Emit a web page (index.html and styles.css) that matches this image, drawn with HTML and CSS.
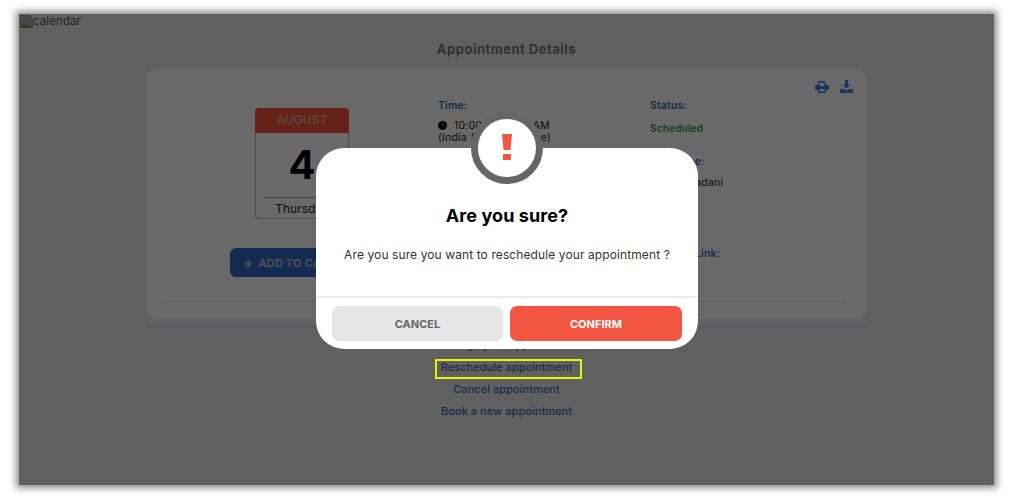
FILE: index.html
```html
<!DOCTYPE html>
<html lang="en">
<head>
    <meta charset="UTF-8">
    <title>Appointment Details</title>
    <link rel="stylesheet" href="styles.css">
</head>
<body>
    <div class="screen">
        <div class="broken-img">
            <svg width="16" height="16" viewBox="0 0 16 16"><path d="M1.500 1.500h9l3 3v9h-12z" fill="#b0b0b0" stroke="#999"/><path d="M2 14l4-5 3 3 2-1 2 3z" fill="#5c9a3c"/></svg>
            <span>calendar</span>
        </div>
        <h1>Appointment Details</h1>

        <div class="card">
            <div class="actions">
                <svg width="14" height="13" viewBox="0 0 14 13"><path d="M3 5V1h6.500L11 2.500V5h1.500Q14 5 14 6.500V10h-3v3H3v-3H0V6.500Q0 5 1.500 5zM4.500 2.500V6h5V3zM4.500 9v2.500h5V9z" fill="#3f7fe0" fill-rule="evenodd"/></svg>
                <svg width="13" height="13" viewBox="0 0 13 13"><path d="M5 0h3v4.500h2.500L6.500 8.500l-4-4H5zM0 9h4l2.500 1.500L9 9h4v4H0z" fill="#3f7fe0"/></svg>
            </div>
            <div class="details">
                <div class="date-col">
                    <div class="calendar">
                        <div class="month">AUGUST</div>
                        <div class="day">4</div>
                        <div class="weekday">Thursday</div>
                    </div>
                    <button class="add-btn"><span class="plus">+</span>ADD TO CALENDAR</button>
                </div>
                <div class="info-col">
                    <div class="label">Time:</div>
                    <div class="value time-value">
                        <svg width="9" height="9" viewBox="0 0 10 10"><circle cx="5" cy="5" r="5" fill="#111"/><path d="M5 2v3.300l2 1" stroke="#777" fill="none"/></svg>
                        <span>10:00 to 10:30 AM<br>(India Standard Time)</span>
                    </div>
                </div>
                <div class="info-col">
                    <div class="label">Status:</div>
                    <div class="value scheduled">Scheduled</div>
                    <div class="label name-label">Full Name:</div>
                    <div class="value">Mohan Vadani</div>
                    <div class="label link-label">Meeting Link:</div>
                </div>
            </div>
            <div class="card-rule"></div>
        </div>
        <div class="page-rule"></div>

        <div class="links">
            <a>Manage your appointment</a>
            <a class="marked">Reschedule appointment</a>
            <a>Cancel appointment</a>
            <a>Book a new appointment</a>
        </div>

        <div class="overlay"></div>
        <div class="modal">
            <div class="alert-icon"><span></span><span></span></div>
            <h2>Are you sure?</h2>
            <p>Are you sure you want to reschedule your appointment ?</p>
            <div class="modal-btns">
                <button class="cancel">CANCEL</button>
                <button class="confirm">CONFIRM</button>
            </div>
        </div>
    </div>
</body>
</html>
```

FILE: styles.css
```css
* {
    margin: 0;
    padding: 0;
    box-sizing: border-box;
}

body {
    font-family: 'Inter', 'Liberation Sans', sans-serif;
    background-color: #fff;
    height: 497px;
    overflow: hidden;
    padding: 14px 20px 0 19px;
}

.screen {
    position: relative;
    height: 471px;
    background-color: #eaeaea;
    box-shadow: 0 0 7px 3px rgba(0, 0, 0, 0.45);
}

.broken-img {
    display: flex;
    align-items: flex-start;
    height: 16px;
    font-size: 11.500px;
    line-height: 14px;
    color: #555;
}

.broken-img span {
    margin-left: -2px;
    letter-spacing: 0.1px;
}

h1 {
    font-size: 13px;
    font-weight: 700;
    color: #777;
    text-align: center;
    margin-top: 11px;
    height: 28px;
    line-height: 16px;
    letter-spacing: 0.5px;
}

.card {
    margin: 0 127px;
    height: 250px;
    background-color: #fff;
    border-radius: 10px;
    box-shadow: 0 -1px 1px #d5e0f2;
    padding: 11px 20px 0 20px;
}

.actions {
    display: flex;
    justify-content: flex-end;
    gap: 11px;
    height: 19px;
    margin-right: -6px;
}

.details {
    display: grid;
    grid-template-columns: 272px 212px 1fr;
    height: 202px;
}

.date-col {
    padding-left: 64px;
    padding-top: 9px;
}

.calendar {
    width: 94px;
    height: 111px;
    margin-left: 25px;
    background-color: #fff;
    border: 1px solid #bbb;
    border-radius: 4px;
    text-align: center;
}

.month {
    margin: -1px -1px 0;
    height: 25px;
    line-height: 24px;
    background-color: #f4503a;
    border-radius: 4px 4px 0 0;
    color: #e0b0a8;
    font-size: 12px;
    font-weight: 500;
}

.day {
    height: 65px;
    line-height: 63px;
    font-size: 40px;
    font-weight: 700;
    color: #000;
    margin: 0 8px;
    border-bottom: 1px solid #aaa;
}

.weekday {
    font-size: 12px;
    line-height: 21px;
    color: #222;
}

.add-btn {
    display: flex;
    align-items: center;
    width: 146px;
    height: 29px;
    margin-top: 29px;
    padding-left: 13px;
    border: none;
    border-radius: 6px;
    background-color: #2f69c4;
    color: #c8c8c8;
    font-family: inherit;
    font-size: 11px;
    font-weight: 600;
    white-space: nowrap;
    letter-spacing: 0.2px;
}

.plus {
    font-size: 15px;
    font-weight: 700;
    margin-right: 5px;
}

.label {
    font-size: 10.500px;
    font-weight: 600;
    color: #3a69b8;
    line-height: 14px;
    letter-spacing: 0.1px;
}

.value {
    font-size: 10.500px;
    line-height: 12px;
    color: #222;
    letter-spacing: 0.2px;
}

.time-value {
    display: flex;
    align-items: flex-start;
    gap: 7px;
    margin-top: 7px;
}

.time-value svg {
    margin-top: 1px;
    flex-shrink: 0;
}

.time-value span {
    margin-left: -16px;
    text-indent: 16px;
    word-spacing: 1px;
}

.scheduled {
    margin-top: 9px;
    font-size: 10px;
    font-weight: 600;
    color: #2f9a2f;
}

.name-label {
    margin-top: 21px;
}

.value + .name-label + .value {
    margin-top: 8px;
}

.link-label {
    margin-top: 58px;
}

.card-rule {
    height: 1px;
    background-color: #ddd;
}

.page-rule {
    height: 1px;
    margin: 7px 127px 0;
    background-color: #c6d6ee;
}

.links {
    display: flex;
    flex-direction: column;
    align-items: center;
    margin-top: 10px;
    font-size: 11px;
    font-weight: 500;
    color: #3a69b8;
    letter-spacing: 0.05px;
}

.links a {
    display: block;
    height: 22px;
    line-height: 17px;
}

.links .marked {
    position: relative;
}

.links .marked::after {
    content: "";
    box-sizing: border-box;
    position: absolute;
    top: 0;
    left: -6px;
    right: -10px;
    height: 20px;
    border: 2px solid #e6f500;
    z-index: 2;
}

.overlay {
    position: absolute;
    inset: 0;
    background-color: rgba(0, 0, 0, 0.59);
}

.modal {
    position: absolute;
    top: 134px;
    left: 297px;
    width: 382px;
    height: 201px;
    background-color: #fff;
    border-radius: 28px;
    text-align: center;
    color: #000;
}

.alert-icon {
    position: absolute;
    top: -36px;
    left: 155px;
    width: 72px;
    height: 72px;
    border: 7px solid #666;
    border-radius: 50%;
    background-color: #fff;
    display: flex;
    flex-direction: column;
    align-items: center;
    padding-top: 15px;
}

.alert-icon span {
    display: block;
    width: 10px;
    background-color: #f25542;
}

.alert-icon span:first-child {
    height: 16px;
    clip-path: polygon(0 0, 100% 0, 85% 100%, 15% 100%);
}

.alert-icon span:last-child {
    height: 6px;
    width: 8px;
    margin-top: 4px;
}

h2 {
    padding-top: 57px;
    font-size: 18px;
    line-height: 22px;
    font-weight: 700;
    letter-spacing: 0.1px;
}

.modal p {
    margin-top: 20px;
    font-size: 12px;
    line-height: 16px;
    color: #333;
    letter-spacing: 0.1px;
}

.modal-btns {
    position: absolute;
    left: 0;
    right: 0;
    bottom: 0;
    height: 53px;
    border-top: 2px solid #eee;
    padding: 8px 16px 0;
    display: flex;
    gap: 7px;
}

.modal-btns button {
    height: 35px;
    border: none;
    border-radius: 7px;
    font-family: inherit;
    font-size: 11px;
    font-weight: 700;
}

.cancel {
    width: 171px;
    background-color: #e6e6e6;
    color: #666;
}

.confirm {
    width: 172px;
    background-color: #f25542;
    color: #fff;
}
```
